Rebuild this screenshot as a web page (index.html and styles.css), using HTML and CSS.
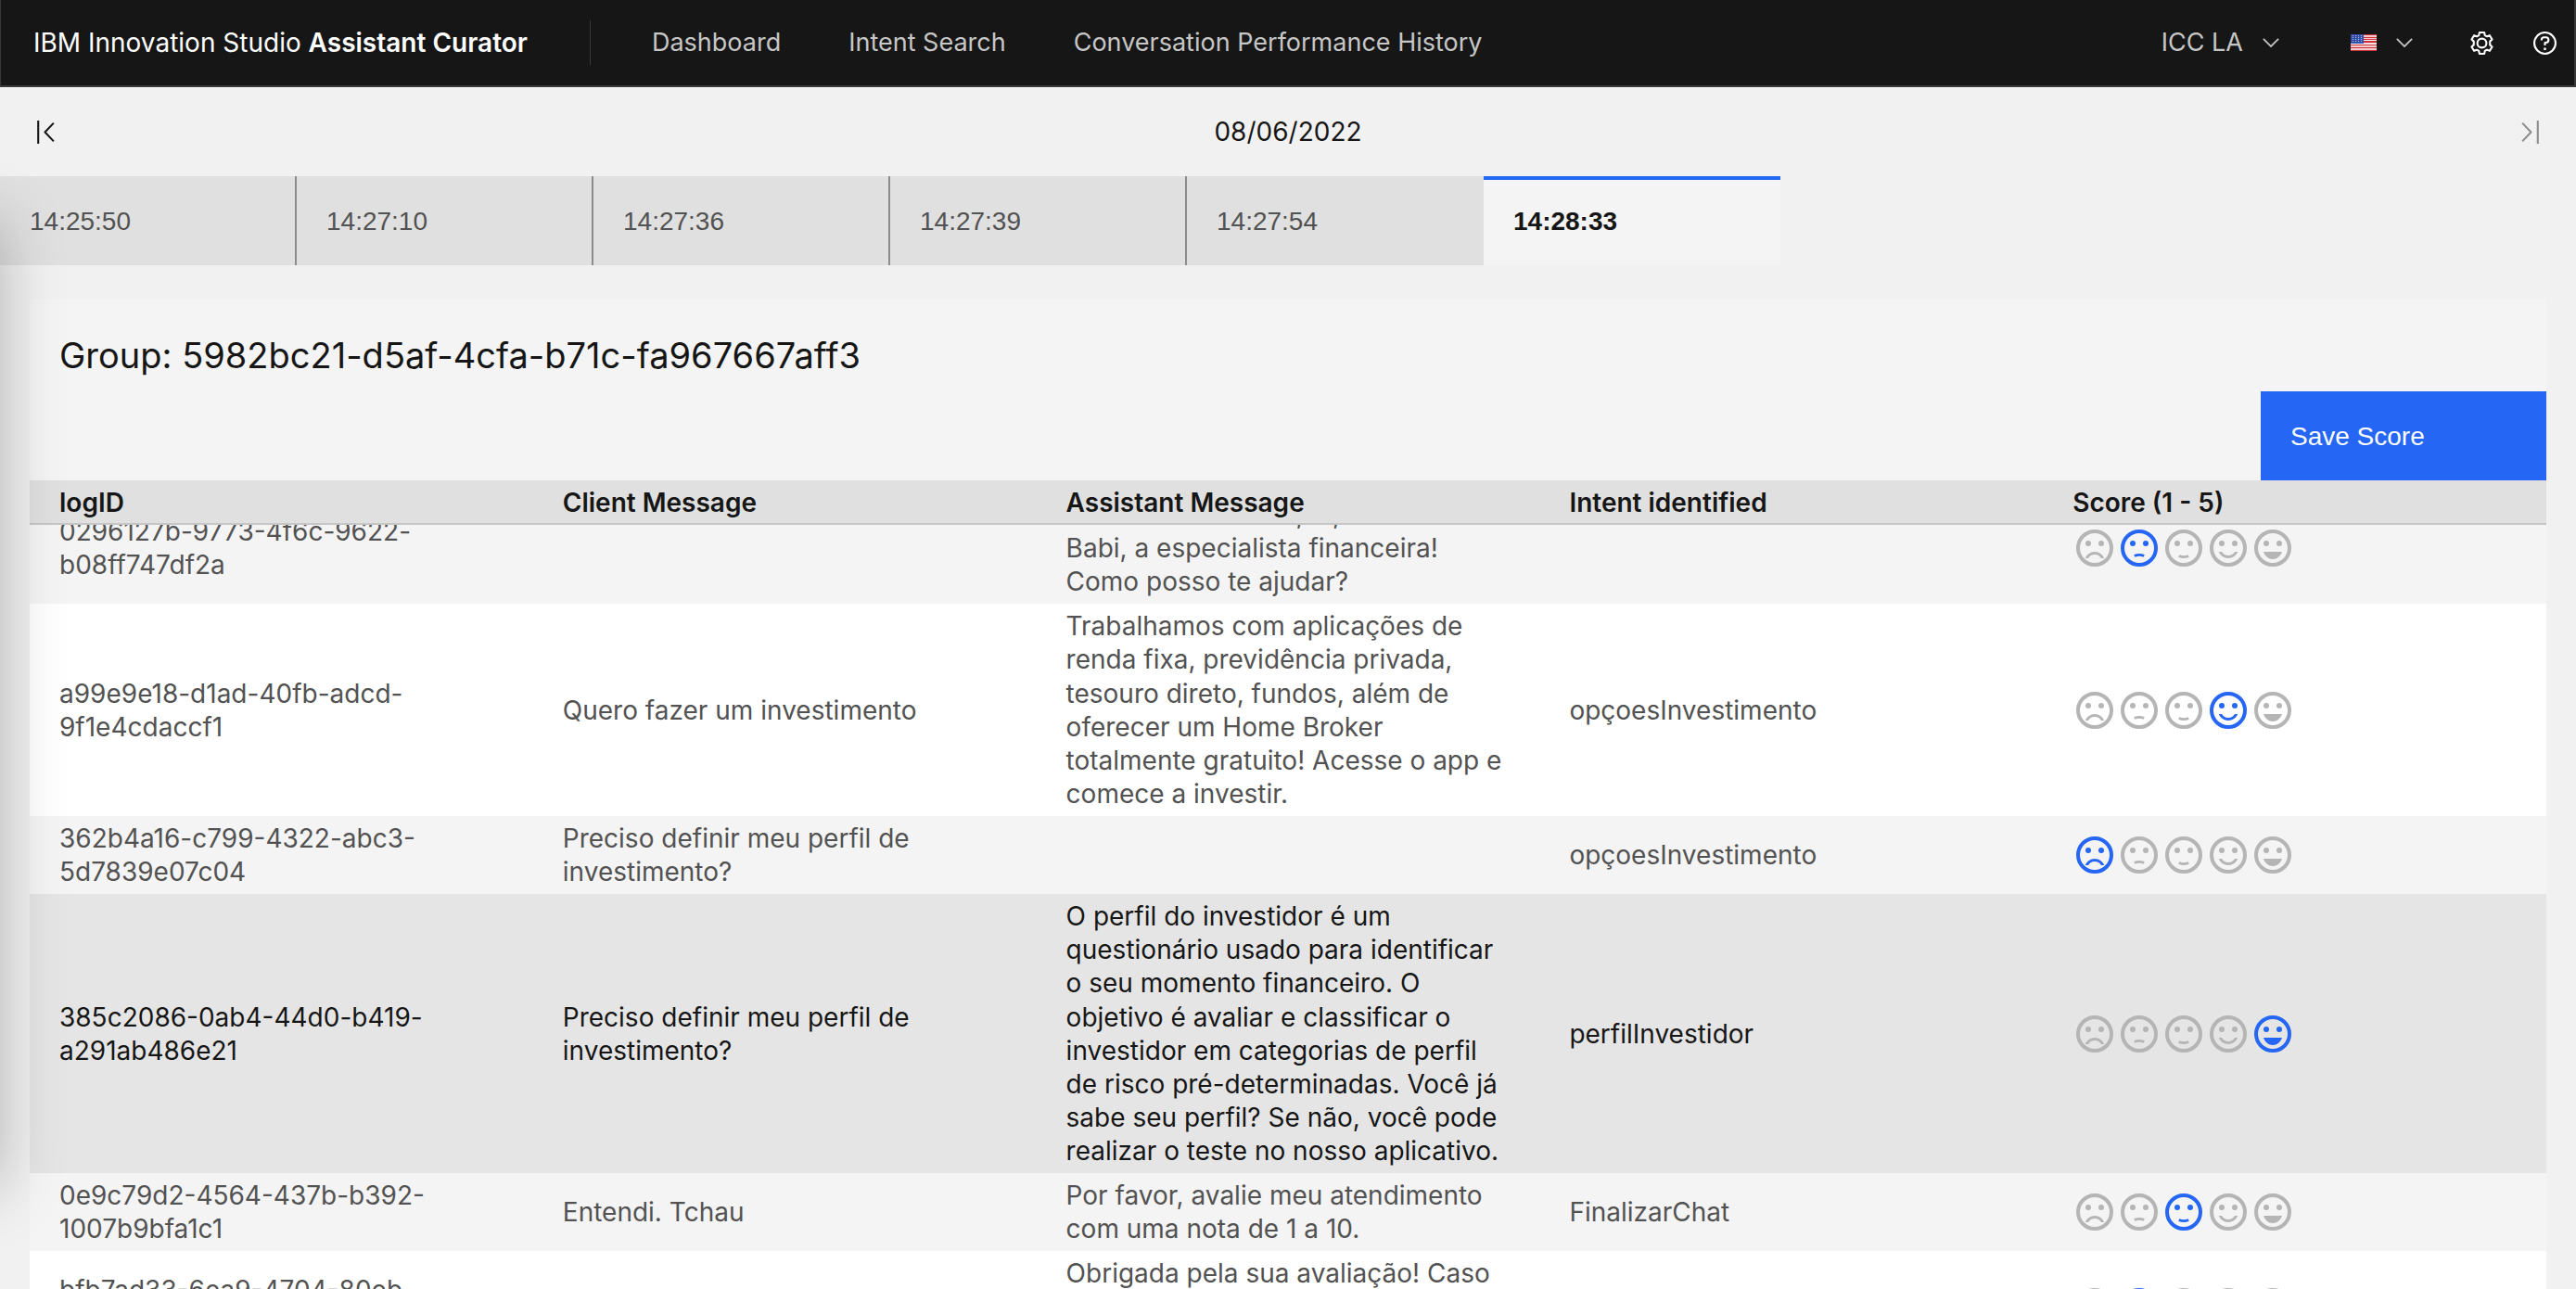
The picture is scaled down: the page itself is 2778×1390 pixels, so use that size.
FILE: index.html
```html
<!DOCTYPE html>
<html lang="en">
<head>
<meta charset="utf-8">
<title>Assistant Curator</title>
<link rel="stylesheet" href="styles.css">
</head>
<body>
<svg class="sprite" aria-hidden="true">
  <symbol id="face-1" viewBox="0 0 24 24">
    <circle cx="12" cy="12" r="9" fill="none" stroke="currentColor" stroke-width="2"/>
    <circle cx="8.5" cy="9.5" r="1.5"/><circle cx="15.5" cy="9.5" r="1.5"/>
    <path d="M12 14c-2.33 0-4.32 1.45-5.12 3.5h1.67c.69-1.19 1.97-2 3.45-2s2.75.81 3.45 2h1.67C16.32 15.45 14.33 14 12 14z"/>
  </symbol>
  <symbol id="face-2" viewBox="0 0 24 24">
    <circle cx="12" cy="12" r="9" fill="none" stroke="currentColor" stroke-width="2"/>
    <circle cx="8.5" cy="9.5" r="1.5"/><circle cx="15.5" cy="9.5" r="1.5"/>
    <path d="M9.4 16.3Q12 15 14.6 16.3" fill="none" stroke="currentColor" stroke-width="1.4"/>
  </symbol>
  <symbol id="face-3" viewBox="0 0 24 24">
    <circle cx="12" cy="12" r="9" fill="none" stroke="currentColor" stroke-width="2"/>
    <circle cx="8.5" cy="9.5" r="1.5"/><circle cx="15.5" cy="9.5" r="1.5"/>
    <path d="M9.4 16.2Q12 17.5 14.6 16.2" fill="none" stroke="currentColor" stroke-width="1.4"/>
  </symbol>
  <symbol id="face-4" viewBox="0 0 24 24">
    <circle cx="12" cy="12" r="9" fill="none" stroke="currentColor" stroke-width="2"/>
    <circle cx="8.5" cy="9.5" r="1.5"/><circle cx="15.5" cy="9.5" r="1.5"/>
    <path d="M12 16c-1.48 0-2.75-.81-3.45-2H6.88c.8 2.05 2.79 3.5 5.12 3.5s4.32-1.45 5.12-3.5h-1.67c-.7 1.19-1.97 2-3.45 2z"/>
  </symbol>
  <symbol id="face-5" viewBox="0 0 24 24">
    <circle cx="12" cy="12" r="9" fill="none" stroke="currentColor" stroke-width="2"/>
    <circle cx="8.5" cy="9.5" r="1.5"/><circle cx="15.5" cy="9.5" r="1.5"/>
    <path d="M12 18c2.28 0 4.22-1.66 5-4H7c.78 2.34 2.72 4 5 4z"/>
  </symbol>
  <symbol id="chevron" viewBox="0 0 16 16"><path d="M8 11L3 6l.7-.7L8 9.600l4.300-4.300L13 6z"/></symbol>
</svg>

<header class="header">
  <a class="brand" href="#">IBM Innovation Studio <b>Assistant Curator</b></a>
  <nav class="nav">
    <a href="#">Dashboard</a>
    <a href="#">Intent Search</a>
    <a href="#">Conversation Performance History</a>
  </nav>
  <div class="tools">
    <button class="menu" type="button">ICC LA <svg class="icon"><use href="#chevron"/></svg></button>
    <button class="menu language" type="button" aria-label="Language">
      <svg class="flag" viewBox="0 0 28 18">
        <path fill="#f3c9cc" d="M0 0h28v18H0z"/>
        <path fill="#d0323c" d="M0 0h28v1H0zM0 3h28v1H0zM0 5h28v1H0zM0 7h28v2H0zM0 11h28v1H0zM0 14h28v1H0zM0 17h28v1H0z"/>
        <path fill="#fff" d="M0 6h28v1H0zM0 10h28v1H0z"/>
        <path fill="#3450a8" d="M0 0h14v10H0z"/>
        <path stroke="#a9b6dc" stroke-dasharray="1 2" d="M2 1.500h12M2 3.500h12M2 5.500h12M2 7.500h12"/>
      </svg>
      <svg class="icon"><use href="#chevron"/></svg>
    </button>
    <button class="tool" type="button" aria-label="Settings">
      <svg class="icon-large" viewBox="0 0 24 24">
        <circle cx="12" cy="12" r="4.700"/>
        <path d="M9.500 1h5l.6 2.900 2.100 1.200 2.900-1.100 2.500 4.200-2.200 2v3.600l2.200 2-2.500 4.200-2.900-1.100-2.100 1.200-.6 2.900h-5l-.6-2.900-2.100-1.200-2.900 1.100-2.500-4.200 2.200-2v-3.600l-2.200-2 2.500-4.200 2.900 1.100 2.100-1.200z"/>
      </svg>
    </button>
    <button class="tool" type="button" aria-label="Help">
      <svg class="icon-large" viewBox="0 0 24 24">
        <circle cx="12" cy="12" r="11"/>
        <path d="M8.500 9V8.500a2.500 2.500 0 0 1 2.500-2.500h2a2.700 2.700 0 0 1 0 5.500h-1v3"/>
        <path d="M12 16.800v2.400" stroke-width="2.400"/>
      </svg>
    </button>
  </div>
</header>

<div class="datebar">
  <button class="step" type="button" aria-label="Previous day">
    <svg class="icon-large" viewBox="0 0 24 24"><path d="M5 0v24M21 2.500L12 12l9 9.500"/></svg>
  </button>
  <time datetime="2022-06-08">08/06/2022</time>
  <button class="step" type="button" aria-label="Next day" disabled>
    <svg class="icon-large" viewBox="0 0 24 24"><path d="M19 0v24M3 2.500L12 12l-9 9.500"/></svg>
  </button>
</div>

<div class="tabs" role="tablist">
  <button class="tab" type="button" role="tab">14:25:50</button>
  <button class="tab" type="button" role="tab">14:27:10</button>
  <button class="tab" type="button" role="tab">14:27:36</button>
  <button class="tab" type="button" role="tab">14:27:39</button>
  <button class="tab" type="button" role="tab">14:27:54</button>
  <button class="tab active" type="button" role="tab" aria-selected="true">14:28:33</button>
</div>

<main class="panel">
  <h1 class="title">Group: 5982bc21-d5af-4cfa-b71c-fa967667aff3</h1>
  <button class="save" type="button">Save Score</button>
  <div class="scroller" id="scroller">
    <table class="log">
      <thead>
        <tr><th>logID</th><th>Client Message</th><th>Assistant Message</th><th>Intent identified</th><th>Score (1 - 5)</th></tr>
      </thead>
      <tbody>
        <tr>
          <td>0296127b-9773-4f6c-9622-b08ff747df2a</td><td></td>
          <td>Olá! Muito bom dia, oi, eu sou a Babi, a especialista financeira! Como posso te ajudar?</td><td></td>
          <td data-score="2"></td>
        </tr>
        <tr>
          <td>a99e9e18-d1ad-40fb-adcd-9f1e4cdaccf1</td><td>Quero fazer um investimento</td>
          <td>Trabalhamos com aplicações de renda fixa, previdência privada, tesouro direto, fundos, além de oferecer um Home Broker totalmente gratuito! Acesse o app e comece a investir.</td>
          <td>opçoesInvestimento</td>
          <td data-score="4"></td>
        </tr>
        <tr>
          <td>362b4a16-c799-4322-abc3-5d7839e07c04</td><td>Preciso definir meu perfil de investimento?</td>
          <td></td><td>opçoesInvestimento</td>
          <td data-score="1"></td>
        </tr>
        <tr class="current">
          <td>385c2086-0ab4-44d0-b419-a291ab486e21</td><td>Preciso definir meu perfil de investimento?</td>
          <td>O perfil do investidor é um questionário usado para identificar o seu momento financeiro. O objetivo é avaliar e classificar o investidor em categorias de perfil de risco pré-determinadas. Você já sabe seu perfil? Se não, você pode realizar o teste no nosso aplicativo.</td>
          <td>perfilInvestidor</td>
          <td data-score="5"></td>
        </tr>
        <tr>
          <td>0e9c79d2-4564-437b-b392-1007b9bfa1c1</td><td>Entendi. Tchau</td>
          <td>Por favor, avalie meu atendimento com uma nota de 1 a 10.</td><td>FinalizarChat</td>
          <td data-score="3"></td>
        </tr>
        <tr>
          <td>bfb7ad33-6ea9-4704-80eb-2c51d07be9a4</td><td></td>
          <td>Obrigada pela sua avaliação! Caso precise de mim, estarei sempre por aqui. Até logo!</td><td></td>
          <td data-score="2"></td>
        </tr>
      </tbody>
    </table>
  </div>
</main>
<div class="drawer" aria-hidden="true"></div>
<script src="app.js"></script>
</body>
</html>
```
FILE: styles.css
```css
* { box-sizing: border-box; }

body {
  margin: 0;
  height: 100vh;
  overflow: hidden;
  display: flex;
  flex-direction: column;
  background: #f1f1f1;
  color: #161616;
  font-family: Inter, "Liberation Sans", sans-serif;
  font-size: 28px;
  line-height: 36px;
}

button {
  border: 0;
  padding: 0;
  background: none;
  color: inherit;
  font: inherit;
}

a { color: inherit; text-decoration: none; }
svg { display: block; fill: currentColor; }
.sprite { position: absolute; width: 0; height: 0; }
.icon { width: 28px; height: 28px; }
.icon-large {
  width: 25px;
  height: 25px;
  fill: none;
  stroke: currentColor;
  stroke-width: 2;
  stroke-linejoin: round;
}

.header {
  display: flex;
  align-items: center;
  height: 94px;
  flex: none;
  padding-left: 35px;
  background: #161616;
  border: solid #393939;
  border-width: 0 2px 2px 1px;
  color: #c6c6c6;
}
.brand { color: #fff; padding-right: 67px; }
.brand b { font-weight: 600; }
.nav {
  display: flex;
  gap: 73px;
  height: 48px;
  align-items: center;
  padding-left: 66px;
  border-left: 1px solid #393939;
  font-size: 27px;
}
.tools { display: flex; align-items: center; margin-left: auto; padding-right: 19px; }
.menu { display: flex; align-items: center; gap: 16px; font-size: 27px; }
.language { margin-left: 72px; }
.flag { width: 28px; height: 18px; }
.tool { margin-left: 57px; color: #fff; }
.tool + .tool { margin-left: 43px; }

.datebar {
  display: flex;
  justify-content: space-between;
  align-items: center;
  height: 96px;
  flex: none;
  padding: 0 36px;
}
.step:disabled { color: #8d8d8d; }

.tabs { display: flex; height: 96px; flex: none; font-family: "Liberation Sans", sans-serif; }
.tab {
  width: 320px;
  padding: 2px 32px 0;
  text-align: left;
  background: #e0e0e0;
  color: #525252;
  border-right: 2px solid #8d8d8d;
}
.tab:nth-last-child(2) { border-right: 0; }
.tab.active {
  background: #f4f4f4;
  color: #161616;
  font-weight: 700;
  border-right: 0;
  border-top: 4px solid #2566f5;
  padding: 0 32px 2px;
}

.panel {
  display: flex;
  flex-direction: column;
  flex: 1;
  min-height: 0;
  margin: 36px 32px 0;
  background: #f4f4f4;
}
.title { margin: 0; padding: 35px 32px 13px; font-size: 38px; line-height: 52px; font-weight: 400; }
.save {
  align-self: flex-end;
  width: 308px;
  height: 96px;
  flex: none;
  padding: 2px 32px 0;
  text-align: left;
  background: #2566f5;
  color: #fff;
  font-family: "Liberation Sans", sans-serif;
}

.scroller { flex: 1; min-height: 0; overflow: auto; scrollbar-width: none; }
.log { width: 100%; table-layout: fixed; border-spacing: 0; }
.log th {
  position: sticky;
  top: 0;
  z-index: 1;
  height: 48px;
  padding: 2px 32px 0;
  text-align: left;
  font-weight: 600;
  background: #e0e0e0;
  border-bottom: 2px solid #c6c6c6;
}
.log td { padding: 6px 32px; line-height: 1.29; color: #525252; vertical-align: middle; }
.log tr:nth-child(even) td { background: #fff; }
.log tr.current:nth-child(even) td { background: #e5e5e5; color: #161616; }

.rating { display: flex; margin: 0; padding: 0; border: 0; color: #b5b5b5; }
.rating label { position: relative; width: 48px; height: 48px; }
.rating input { position: absolute; inset: 0; width: 48px; height: 48px; margin: 0; opacity: 0; }
.rating svg { width: 48px; height: 48px; }
.rating input:checked + svg { color: #2566f5; }

/* closed side drawer: only its shadow reaches the page */
.drawer {
  position: fixed;
  left: -200px;
  top: 240px;
  bottom: 110px;
  width: 200px;
  box-shadow: 0 0 64px rgba(0, 0, 0, .26);
  pointer-events: none;
  z-index: 2;
}
```
FILE: app.js
```js
const labels = ["Very bad", "Bad", "Neutral", "Good", "Very good"];

document.querySelectorAll("[data-score]").forEach((cell, row) => {
  const faces = labels.map((label, i) => `
    <label><input type="radio" name="score-${row}" aria-label="${label}"${i + 1 === Number(cell.dataset.score) ? " checked" : ""}>
    <svg aria-hidden="true"><use href="#face-${i + 1}"/></svg></label>`);
  cell.innerHTML = `<fieldset class="rating">${faces.join("")}</fieldset>`;
});

document.getElementById("scroller").scrollTop = 35;
```
